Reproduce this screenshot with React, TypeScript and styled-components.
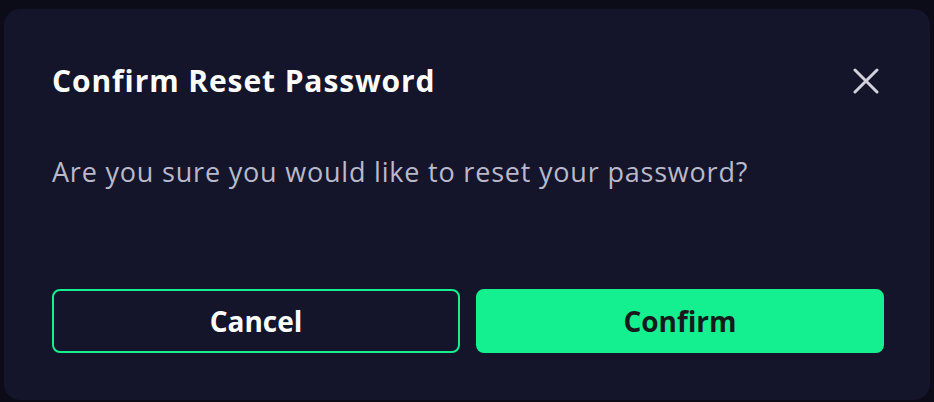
import React from "react";
import styled, { createGlobalStyle } from "styled-components";

const GlobalStyle = createGlobalStyle`
  html, body {
    margin: 0;
    padding: 0;
    background: #0c0c18;
    overflow: hidden;
  }
  * {
    box-sizing: border-box;
  }
`;

const Backdrop = styled.div`
  width: 934px;
  height: 402px;
  padding: 9px 4px 2px 4px;
  background: #0c0c18;
`;

const Modal = styled.div`
  width: 926px;
  height: 391px;
  background: #14142b;
  border-radius: 16px;
  padding: 50px 46px 0 48px;
  display: flex;
  flex-direction: column;
  font-family: "Open Sans", "Liberation Sans", sans-serif;
`;

const Header = styled.div`
  display: flex;
  align-items: center;
  justify-content: space-between;
  height: 44px;
`;

const Title = styled.h2`
  margin: 0;
  font-size: 30px;
  line-height: 44px;
  font-weight: 700;
  letter-spacing: 0.9px;
  color: #ffffff;
`;

const CloseButton = styled.button`
  width: 32px;
  height: 32px;
  display: flex;
  align-items: center;
  justify-content: center;
  padding: 0;
  margin-right: 2px;
  border: none;
  background: transparent;
  cursor: pointer;
`;

const Message = styled.p`
  margin: 53px 0 0;
  font-size: 27px;
  line-height: 32px;
  letter-spacing: 0.8px;
  color: #b9b9c9;
`;

const Actions = styled.div`
  margin-top: auto;
  margin-bottom: 47px;
  display: grid;
  grid-template-columns: 1fr 1fr;
  gap: 16px;
`;

const Button = styled.button<{ $primary?: boolean }>`
  height: 64px;
  border-radius: 8px;
  font-family: "Open Sans", "Liberation Sans", sans-serif;
  font-size: 28px;
  font-weight: 700;
  cursor: pointer;
  border: 2px solid #14f08f;
  background: ${(p) => (p.$primary ? "#14f08f" : "transparent")};
  color: ${(p) => (p.$primary ? "#171a1c" : "#ffffff")};
`;

const CloseIcon = () => (
  <svg width="26" height="26" viewBox="0 0 26 26" fill="none">
    <path
      d="M2 2L24 24M24 2L2 24"
      stroke="#d2d2da"
      strokeWidth="3"
      strokeLinecap="round"
    />
  </svg>
);

export default function App() {
  return (
    <>
      <GlobalStyle />
      <Backdrop>
        <Modal>
          <Header>
            <Title>Confirm Reset Password</Title>
            <CloseButton aria-label="Close">
              <CloseIcon />
            </CloseButton>
          </Header>
          <Message>Are you sure you would like to reset your password?</Message>
          <Actions>
            <Button>Cancel</Button>
            <Button $primary>Confirm</Button>
          </Actions>
        </Modal>
      </Backdrop>
    </>
  );
}
